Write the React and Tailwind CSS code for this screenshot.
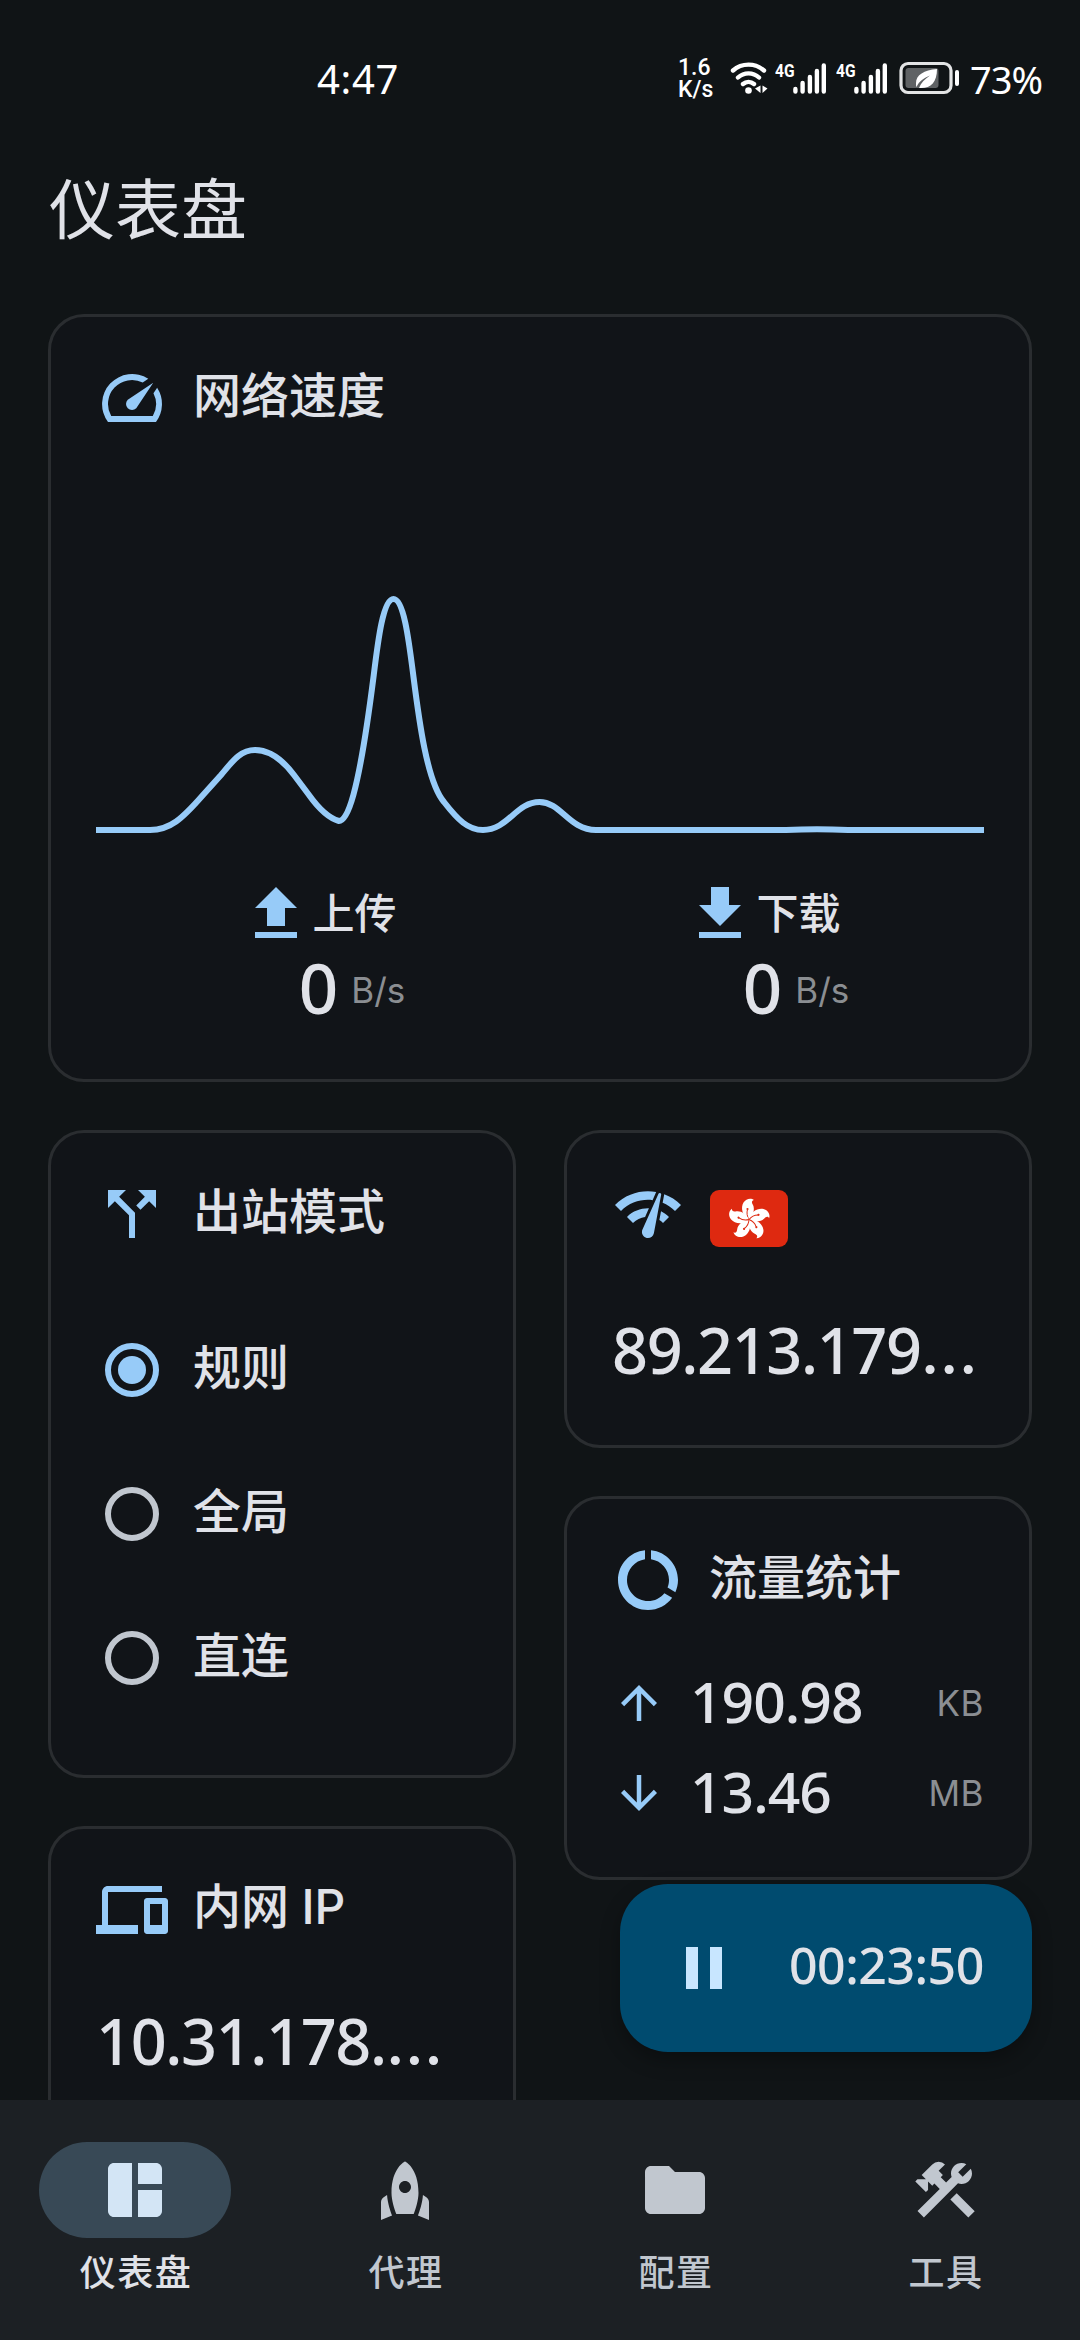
/**
 * Proxy client dashboard
 *
 * Network speed, outbound mode, detected IP, traffic totals and
 * the intranet IP, with a bottom navigation bar.
 */

const ICONS = {
  speed:
    'M20.38 8.57l-1.23 1.85a8 8 0 0 1-.22 7.58H5.07A8 8 0 0 1 15.58 6.85l1.85-1.23A10 10 0 0 0 4 20h16a10 10 0 0 0 .38-11.43zm-9.79 6.84a2 2 0 0 0 2.83 0l5.66-8.49-8.49 5.66a2 2 0 0 0 0 2.83z',
  upload: 'M5 20h14v-2H5v2zm0-10h4v6h6v-6h4l-7-7-7 7z',
  download: 'M19 9h-4V3H9v6H5l7 7 7-7zM5 18v2h14v-2H5z',
  split:
    'M14 4l2.29 2.29-2.88 2.88 1.42 1.42 2.88-2.88L20 10V4zm-4 0H4v6l2.29-2.29 4.71 4.7V20h2v-8.41l-5.29-5.3z',
  networkCheck:
    'M15.9 5c-.17 0-.32.09-.41.23l-.07.15-5.18 11.65c-.16.29-.26.61-.26.96 0 1.11.9 2.01 2.01 2.01.96 0 1.77-.68 1.96-1.59l.01-.03L16.4 5.5c0-.28-.22-.5-.5-.5zM1 9l2 2c2.88-2.88 6.79-4.08 10.53-3.62l1.19-2.68C9.89 3.84 4.74 5.27 1 9zm20 2l2-2c-1.64-1.64-3.55-2.82-5.59-3.57l-.53 2.82c1.5.62 2.9 1.53 4.12 2.75zm-4 4l2-2c-.8-.8-1.7-1.42-2.66-1.89l-.55 2.92c.42.27.83.59 1.21.97zM5 13l2 2c1.13-1.13 2.56-1.79 4.03-2l1.28-2.88c-2.63-.08-5.3.87-7.31 2.88z',
  dataUsage:
    'M13 2.05v3.03c3.39.49 6 3.39 6 6.92 0 .9-.18 1.75-.48 2.54l2.6 1.53c.56-1.24.88-2.62.88-4.07 0-5.18-3.95-9.45-9-9.95zM12 19c-3.87 0-7-3.13-7-7 0-3.53 2.61-6.43 6-6.92V2.05c-5.06.5-9 4.76-9 9.95 0 5.52 4.47 10 9.99 10 3.31 0 6.24-1.61 8.06-4.09l-2.6-1.53C16.17 17.98 14.21 19 12 19z',
  devices:
    'M4 6h18V4H4c-1.1 0-2 .9-2 2v11H0v3h14v-3H4V6zm19 2h-6c-.55 0-1 .45-1 1v10c0 .55.45 1 1 1h6c.55 0 1-.45 1-1V9c0-.55-.45-1-1-1zm-1 9h-4v-7h4v7z',
  arrowUp: 'M4 12l1.41 1.41L11 7.83V20h2V7.83l5.58 5.59L20 12l-8-8-8 8z',
  arrowDown: 'M20 12l-1.41-1.41L13 16.17V4h-2v12.17l-5.58-5.59L4 12l8 8 8-8z',
  pause: 'M6 19h4V5H6v14zm8-14v14h4V5h-4z',
  dashboard:
    'M11 21H5c-1.1 0-2-.9-2-2V5c0-1.1.9-2 2-2h6v18zm2 0h6c1.1 0 2-.9 2-2v-7h-8v9zm8-11V5c0-1.1-.9-2-2-2h-6v7h8z',
  rocket:
    'M12 2.5s4.5 2.04 4.5 10.5c0 2.49-1.04 5.57-1.6 7H9.1c-.56-1.43-1.6-4.51-1.6-7C7.5 4.54 12 2.5 12 2.5zm2 8.5c0-1.1-.9-2-2-2s-2 .9-2 2 .9 2 2 2 2-.9 2-2zm-6.31 9.52c-.48-1.23-1.52-4.17-1.67-6.87l-1.13.75c-.56.38-.89 1-.89 1.67V22l3.69-1.48zM20 22v-5.93c0-.67-.33-1.29-.89-1.66l-1.13-.75c-.15 2.69-1.2 5.64-1.67 6.87L20 22z',
  folder:
    'M10 4H4c-1.1 0-1.99.9-1.99 2L2 18c0 1.1.9 2 2 2h16c1.1 0 2-.9 2-2V8c0-1.1-.9-2-2-2h-8l-2-2z',
  tools:
    'M13.783 15.172l2.121-2.121 5.996 5.996-2.121 2.121zM17.5 10c1.93 0 3.5-1.57 3.5-3.5 0-.58-.16-1.12-.41-1.6l-2.7 2.7-1.49-1.49 2.7-2.7c-.48-.25-1.02-.41-1.6-.41C15.57 3 14 4.57 14 6.5c0 .41.08.8.21 1.16l-1.85 1.85-1.78-1.78.71-.71-1.41-1.41L12 3.49a3 3 0 0 0-4.24 0L4.22 7.03l1.41 1.41H2.81l-.71.71 3.54 3.54.71-.71V9.15l1.41 1.41.71-.71 1.78 1.78-7.41 7.41 2.12 2.12L16.34 9.79c.36.13.75.21 1.16.21z'
};

const SPEED_CURVE =
  'M0 250H54C74 250 86 239 107 215L125 195C136 182 144 170 159 170C174 170 186 179 198 195L213 215C223 229 232 238 243 241C251 241 262 219 277.5 97C282 61 287 19 297.5 19C308 19 313 62 317.5 97C323 140 331 202 348 222C362 240 372 250 387 250C412 250 420 222 443.5 222C465 222 473 250 500 250H690Q721 248.5 752 250H888';

const NAV_ITEMS = [
  { icon: 'dashboard', label: '仪表盘' },
  { icon: 'rocket', label: '代理' },
  { icon: 'folder', label: '配置' },
  { icon: 'tools', label: '工具' }
];

const MODES = ['规则', '全局', '直连'];

function Icon({ name, className = 'size-[72px]' }) {
  return (
    <svg viewBox="0 0 24 24" fill="currentColor" className={`shrink-0 ${className}`}>
      <path d={ICONS[name]} />
    </svg>
  );
}

function Card({ className = '', children }) {
  return (
    <section className={`rounded-[36px] border-[3px] border-[#2a2d30] bg-[#111418] px-[45px] pt-[45px] ${className}`}>
      {children}
    </section>
  );
}

function CardTitle({ icon, children }) {
  return (
    <div className="flex h-[72px] items-center gap-[25px]">
      <span className="text-[#97cbf8]">
        <Icon name={icon} />
      </span>
      <h2 className="-mt-[7px] text-[48px] leading-[72px] font-medium whitespace-nowrap">{children}</h2>
    </div>
  );
}

/**
 * Large address line, cut off with an ellipsis
 */
function Address({ text, className = '' }) {
  return (
    <p className={`text-[63px] leading-[76px] font-medium tracking-[-1.4px] whitespace-nowrap ${className}`}>
      {text}
      <span className="font-[Inter] tracking-[1px]">…</span>
    </p>
  );
}

function SignalBars() {
  return (
    <div className="flex">
      <span className="mt-[-2px] w-[18px] origin-left scale-x-[0.82] font-[Roboto] text-[19px] leading-[20px] font-bold">
        4G
      </span>
      <svg viewBox="0 0 33 32" className="h-8 w-[33px]" stroke="currentColor" strokeWidth="4.4" strokeLinecap="round">
        <path d="M2.4 26v2.6M9.6 20v8.6M16.9 14v14.6M23.9 8v20.6M30.8 2.4v26.2" />
      </svg>
    </div>
  );
}

function StatusBar() {
  return (
    <header className="flex h-[158px] items-start text-white">
      <span className="mt-[54px] ml-[317px] w-[361px] text-[40px] leading-[50px] tracking-[0.7px]">4:47</span>
      <div className="mt-[57px] flex w-[52px] flex-col font-[Roboto] text-[23px] leading-[22px] font-medium">
        <span>1.6</span>
        <span>K/s</span>
      </div>
      <svg viewBox="0 0 38 32" className="mt-[62px] h-8 w-[38px]" fill="none" stroke="currentColor" strokeWidth="4.4" strokeLinecap="round">
        <path d="M3 8.500a23.500 23.500 0 0 1 31 0M8 15.500a15.500 15.500 0 0 1 21 0M13 22a8.500 8.500 0 0 1 11 0" />
        <circle cx="18.500" cy="28.500" r="3.300" fill="currentColor" stroke="none" />
        <path d="M30.500 23.500v7.500l-5.500-4.500zM32.500 23.500v7.500l5-4.500z" fill="currentColor" stroke="none" />
      </svg>
      <div className="mt-[63px] ml-[7px] flex gap-[10px]">
        <SignalBars />
        <SignalBars />
      </div>
      <svg viewBox="0 0 62 34" className="mt-[61px] ml-[12px] h-[34px] w-[62px]">
        <rect x="2" y="2.500" width="50" height="29" rx="7" fill="none" stroke="#e3e4e5" strokeWidth="3.200" />
        <rect x="6.500" y="7" width="33" height="20" rx="3" fill="#5f6264" />
        <path d="M38 8C25 9 17 14 17 22c0 2 0 3 .500 4C20 20 25 17 31 14.500c-5 3.500-9 7-11 12.500 11 1 18-5 18-19z" fill="#fff" />
        <path d="M58 11v12" stroke="#fff" strokeWidth="4" strokeLinecap="round" />
      </svg>
      <span className="mt-[54px] ml-[9px] text-[38px] leading-[50px] tracking-[-1px]">73%</span>
    </header>
  );
}

function SpeedStat({ icon, label }) {
  return (
    <div className="flex flex-1 flex-col items-center">
      <div className="flex h-[72px] items-center pl-px">
        <span className="text-[#97cbf8]">
          <Icon name={icon} />
        </span>
        <span className="-mt-[2px] text-[42px] leading-[60px] font-medium">{label}</span>
      </div>
      <div className="flex h-[78px] items-center gap-[13px] pl-[68px]">
        <span className="-mt-1 text-[69px] leading-[78px] font-medium">0</span>
        <span className="mt-[2px] font-[Inter] text-[35px] leading-[48px] text-[#8b8e92]">B/s</span>
      </div>
    </div>
  );
}

function Radio({ label, checked }) {
  return (
    <div className="flex h-[144px] items-center gap-[34px] pl-[9px]">
      {checked ? (
        <span className="flex size-[54px] items-center justify-center rounded-full border-[6px] border-[#97cbf8]">
          <span className="size-7 rounded-full bg-[#97cbf8]" />
        </span>
      ) : (
        <span className="size-[54px] rounded-full border-[6px] border-[#c1c7cf]" />
      )}
      <span className="-mt-[7px] text-[48px] leading-[72px] font-medium">{label}</span>
    </div>
  );
}

function HongKongFlag() {
  return (
    <svg viewBox="0 0 78 57" className="h-[57px] w-[78px]">
      <rect width="78" height="57" rx="9" fill="#de2910" />
      {[0, 72, 144, 216, 288].map((angle) => (
        <g key={angle} transform={`translate(39 29.500) rotate(${angle})`}>
          <path d="M0 0C-7-4-8.500-12-5.500-17C-3-21 2-22 5-19.500C2.500-19 2.500-17 4-14.500C6-10.500 4.500-4 0 0z" fill="#fff" />
          <path d="M0 0C-2-3-2.500-7-1.500-10" fill="none" stroke="#de2910" strokeWidth="1" />
          <circle cx="-1.500" cy="-10.500" r="1.100" fill="#de2910" />
        </g>
      ))}
    </svg>
  );
}

function TrafficRow({ icon, value, unit }) {
  return (
    <div className="flex h-[90px] items-center">
      <span className="text-[#97cbf8]">
        <Icon name={icon} className="size-[54px]" />
      </span>
      <span className="-mt-[5px] ml-[24px] text-[57px] leading-[72px] font-medium tracking-[-1px]">{value}</span>
      <span className="-mt-[1px] ml-auto font-[Inter] text-[35px] leading-[48px] tracking-[0.5px] text-[#8b8e92]">{unit}</span>
    </div>
  );
}

export default function App() {
  return (
    <div className="relative flex h-[2340px] w-[1080px] flex-col overflow-hidden bg-[#101416] font-['Noto_Sans','Noto_Sans_CJK_SC',sans-serif] text-[#e0e2e8]">
      <StatusBar />
      <h1 className="h-[156px] pl-[49px] text-[66px] leading-[100px]">仪表盘</h1>

      <main className="flex min-h-0 flex-1 flex-col gap-12 overflow-hidden px-12">
        {/* Network speed */}
        <Card className="h-[768px] shrink-0">
          <CardTitle icon="speed">网络速度</CardTitle>
          <svg viewBox="0 0 888 298" className="mt-[146px] block h-[298px] w-full">
            <path d={SPEED_CURVE} fill="none" stroke="#97cbf8" strokeWidth="6" />
          </svg>
          <div className="flex">
            <SpeedStat icon="upload" label="上传" />
            <SpeedStat icon="download" label="下载" />
          </div>
        </Card>

        <div className="flex gap-12">
          <div className="flex flex-1 flex-col gap-12">
            {/* Outbound mode */}
            <Card className="h-[648px]">
              <CardTitle icon="split">出站模式</CardTitle>
              <div className="mt-12">
                {MODES.map((mode, idx) => (
                  <Radio key={mode} label={mode} checked={idx === 0} />
                ))}
              </div>
            </Card>

            {/* Intranet IP */}
            <Card className="h-[318px]">
              <CardTitle icon="devices">
                内网 <span className="font-[Inter]">IP</span>
              </CardTitle>
              <Address text="10.31.178." className="mt-[57px]" />
            </Card>
          </div>

          <div className="flex flex-1 flex-col gap-12">
            {/* Detected IP */}
            <Card className="h-[318px]">
              <div className="flex h-[72px] gap-[26px]">
                <span className="text-[#97cbf8]">
                  <Icon name="networkCheck" />
                </span>
                <div className="pt-3">
                  <HongKongFlag />
                </div>
              </div>
              <Address text="89.213.179" className="mt-[62px]" />
            </Card>

            {/* Traffic totals */}
            <Card className="h-[384px]">
              <CardTitle icon="dataUsage">流量统计</CardTitle>
              <div className="mt-[42px]">
                <TrafficRow icon="arrowUp" value="190.98" unit="KB" />
                <TrafficRow icon="arrowDown" value="13.46" unit="MB" />
              </div>
            </Card>
          </div>
        </div>
      </main>

      {/* Running time button */}
      <button className="absolute right-12 bottom-[288px] flex h-[168px] w-[412px] items-center rounded-[48px] bg-[#004b6f] pl-12 shadow-[0_8px_20px_rgba(0,0,0,0.3)]">
        <span className="text-[#c8e6ff]">
          <Icon name="pause" />
        </span>
        <span className="-mt-[7px] ml-[49px] text-[50px] leading-[60px] font-medium tracking-[-0.5px]">00:23:50</span>
      </button>

      <nav className="flex h-[240px] shrink-0 bg-[#1c2024] pt-[42px]">
        {NAV_ITEMS.map((item, idx) => (
          <div key={item.label} className={`flex flex-1 flex-col items-center ${idx === 0 ? 'text-[#e0e2e8]' : 'text-[#c1c7cf]'}`}>
            <div className={`flex h-24 w-48 items-center justify-center rounded-full ${idx === 0 ? 'bg-[#384956] text-[#d3e5f5]' : ''}`}>
              <Icon name={item.icon} />
            </div>
            <span className="mt-[9px] pl-[2px] text-[36px] leading-[52px] font-medium tracking-[1.5px]">{item.label}</span>
          </div>
        ))}
      </nav>
    </div>
  );
}
